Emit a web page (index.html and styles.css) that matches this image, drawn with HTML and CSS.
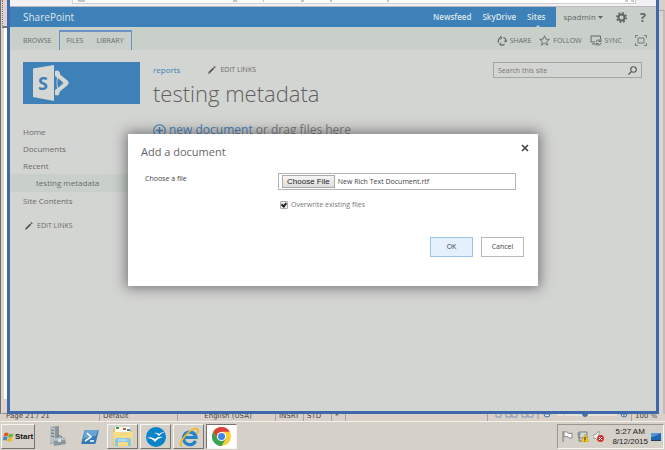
FILE: index.html
```html
<!DOCTYPE html>
<html lang="en">
  <head>
    <meta charset="UTF-8" />
    <meta name="viewport" content="width=device-width, initial-scale=1.0" />
    <title>testing metadata - Add a document</title>
    <link rel="stylesheet" href="styles.css">
  </head>
  <body>
    <div class="workspace">
      <div class="edge edge-left">
        <span class="edge-tool"></span>
        <span class="edge-page"></span>
        <span class="edge-foot"></span>
      </div>

      <div class="window">
        <div class="address-row">
          <div class="address">
            <svg width="320" height="2" viewBox="0 0 320 2" fill="none" stroke="#888"><path d="M5 1h7M160 1h4M190 1h1M228 1h3M257 1h2M314 1h2"/></svg>
            <svg width="12" height="2" viewBox="0 0 12 2" fill="none" stroke="#999"><path d="M2 1h3M8 1h3"/></svg>
          </div>
        </div>

        <header class="suite-bar">
          <a class="brand" href="#">SharePoint</a>
          <nav class="suite-links">
            <a href="#">Newsfeed</a>
            <a href="#">SkyDrive</a>
            <a class="current" href="#">Sites</a>
          </nav>
          <div class="account">
            <button class="user-btn">spadmin
              <svg width="5" height="3" viewBox="0 0 5 3"><path d="M0 0h5L2.500 3z" fill="#666"/></svg>
            </button>
            <button class="icon-btn" aria-label="Settings">
              <svg width="11" height="11" viewBox="0 0 22 22"><circle cx="11" cy="11" r="6" fill="none" stroke="#666" stroke-width="4"/><circle cx="11" cy="11" r="9" fill="none" stroke="#666" stroke-width="4" stroke-dasharray="3.500 3.569"/></svg>
            </button>
            <button class="icon-btn help" aria-label="Help">?</button>
          </div>
        </header>

        <div class="ribbon">
          <button class="tab">BROWSE</button>
          <div class="tab-group">
            <button class="tab">FILES</button>
            <button class="tab">LIBRARY</button>
          </div>
          <div class="ribbon-actions">
            <button class="action">
              <svg width="10" height="10" viewBox="0 0 20 20" fill="none" stroke="#666" stroke-width="2.500"><path d="M3 13A7.500 7.500 0 0 1 8 3M13 3a7.500 7.500 0 0 1 5 8M15 16.500a7.500 7.500 0 0 1-9 0"/><path d="M6 1l4 2-3 4M20 8l-2 4-4-2M8 19l-3-3 3-3" stroke-width="2"/></svg>
              SHARE
            </button>
            <button class="action">
              <svg width="11" height="11" viewBox="0 0 22 22" fill="none" stroke="#666" stroke-width="1.800"><path d="M11 1.500l2.700 6.700 7 .5-5.400 4.500 1.800 7L11 16.300 4.900 20.200l1.800-7L1.300 8.700l7-.5z"/></svg>
              FOLLOW
            </button>
            <button class="action">
              <svg width="12" height="11" viewBox="0 0 24 22" fill="none" stroke="#666" stroke-width="2"><path d="M10 14H2V2h19v6M4 18h6"/><path d="M12 14a5 5 0 0 1 9-2M22 16a5 5 0 0 1-9 2M22 8v5h-5M12 21v-4h5"/></svg>
              SYNC
            </button>
            <button class="action focus" aria-label="Focus on content">
              <svg width="12" height="11" viewBox="0 0 24 22" fill="none" stroke="#666" stroke-width="1.600"><path d="M1 6V1h5M18 1h5v5M23 16v5h-5M6 21H1v-5"/><path d="M6 6h12v10H6z"/></svg>
            </button>
          </div>
        </div>

        <div class="page">
          <aside class="side">
            <a class="logo" href="#" aria-label="SharePoint">
              <svg width="38" height="36" viewBox="0 0 38 36">
                <path d="M0 3.500L21 0v36L0 32z" fill="#d5d7d4"/>
                <text class="logo-letter" x="5" y="25">S</text>
                <g fill="#d5d7d4"><path d="M22 6l3-.500q2.500 1.500 2 4l8 6.500q1.500 2-.2 4l-8 6.500q0 3-2 4L22 30v-5l2-1.500q-1-5.500 0-11L22 11z"/></g>
                <path d="M25 13l5.500 5-5.500 5q-1.500-5 0-10z" fill="#3e80b8"/>
              </svg>
            </a>
            <nav class="side-nav">
              <a href="#">Home</a>
              <a href="#">Documents</a>
              <a href="#">Recent</a>
              <a class="child" href="#">testing metadata</a>
              <a href="#">Site Contents</a>
            </nav>
            <button class="edit-links">
              <svg width="8" height="8" viewBox="0 0 16 16"><path d="M0 16l1.500-4.500L10 3l2.500 2.500L4 14zM11 2l2-2 2.500 2.500-2 2z" fill="#555"/></svg>
              EDIT LINKS
            </button>
          </aside>

          <main class="content">
            <div class="top-row">
              <a class="crumb" href="#">reports</a>
              <button class="edit-links">
                <svg width="8" height="8" viewBox="0 0 16 16"><path d="M0 16l1.500-4.500L10 3l2.500 2.500L4 14zM11 2l2-2 2.500 2.500-2 2z" fill="#555"/></svg>
                EDIT LINKS
              </button>
              <form class="search">
                <input type="text" placeholder="Search this site" aria-label="Search this site" />
                <button type="button" aria-label="Search">
                  <svg width="9" height="9" viewBox="0 0 18 18" fill="none" stroke="#555" stroke-width="2.200"><circle cx="11" cy="7" r="5.500"/><path d="M7 11l-6 6"/></svg>
                </button>
              </form>
            </div>
            <h1>testing metadata</h1>
            <p class="new-row">
              <svg width="13" height="13" viewBox="0 0 26 26" fill="none" stroke="#3e80b8"><circle cx="13" cy="13" r="11.500" stroke-width="2.400"/><path d="M13 6v14M6 13h14" stroke-width="3"/></svg>
              <span><a href="#">new document</a> or drag files here</span>
            </p>
          </main>
        </div>

        <div class="overlay">
          <div class="dialog" role="dialog" aria-labelledby="dialogTitle">
            <div class="dialog-head">
              <h2 id="dialogTitle">Add a document</h2>
              <button class="close" aria-label="Close">
                <svg width="8" height="8" viewBox="0 0 8 8"><path d="M1 1l6 6M7 1L1 7" stroke="#444" stroke-width="1.600"/></svg>
              </button>
            </div>
            <div class="dialog-body">
              <label class="field-label" for="fileInput">Choose a file</label>
              <div class="field">
                <input type="file" id="fileInput" />
                <label class="check"><input type="checkbox" checked /> Overwrite existing files</label>
              </div>
            </div>
            <div class="dialog-actions">
              <button class="dialog-btn primary">OK</button>
              <button class="dialog-btn">Cancel</button>
            </div>
          </div>
        </div>
      </div>

      <div class="edge edge-right"></div>
    </div>

    <div class="status-bar">
      <span class="status-page">Page 21 / 21</span>
      <span class="status-style">Default</span>
      <span class="status-lang">English (USA)</span>
      <span class="status-mode">INSRT</span>
      <span class="status-mode">STD</span>
      <span class="status-mark">*</span>
      <span class="status-mark"></span>
      <span class="status-rest"></span>
      <span class="status-zoom">
        <svg width="140" height="8" viewBox="0 0 140 8" fill="none" stroke="#46739c">
          <path d="M5 0v4h5V0M15 0v4h5V0M21 0v4h5V0M31 0v4h5V0M37 0v4h5V0" stroke="#7f9ab5"/>
          <path d="M47 0v6M73 0v3" stroke="#999"/>
          <path d="M66 2h60" stroke="#f4f2ee"/>
          <circle cx="56" cy="1" r="3" fill="#dce8f3"/><path d="M54 1h4"/>
          <circle cx="94" cy="1" r="2.500" fill="#46739c"/>
          <circle cx="133" cy="1" r="3" fill="#dce8f3"/><path d="M131 1h4M133 0v3"/>
        </svg>
      </span>
      <span class="status-percent">100 %</span>
    </div>

    <footer class="taskbar">
      <button class="start">
        <svg width="11" height="10" viewBox="0 0 22 20"><path d="M3 2q4-2 8 0L9 9Q5 7 1 9z" fill="#e2572b"/><path d="M12 3q4 2 9 0l-2 7q-5 2-9 0z" fill="#6cb33f"/><path d="M1 10q4-2 8 0l-2 7q-4-2-7 0z" fill="#3a86d0"/><path d="M10 11q4 2 9 0l-2 7q-5 2-9 0z" fill="#f6b91c"/></svg>
        Start
      </button>
      <div class="tasks">
        <button class="task" aria-label="Server Manager">
          <svg width="20" height="21" viewBox="0 0 20 21"><path d="M3 1l9-1v16l-9 2z" fill="#8a949b"/><path d="M3 1l5 1v16l-5-1z" fill="#b9c1c6"/><path d="M4 4l3 .500M4 7l3 .500M4 10l3 .500" stroke="#667078"/><path d="M6 12l12-1 1 7-12 2z" fill="#89979f"/><path d="M6 12l12-1v3L6 15z" fill="#b4c0c6"/><path d="M10 11q2-3 5 0" fill="none" stroke="#5e696f"/><path d="M11 13h3v3h-3z" fill="#dbe0e2"/></svg>
        </button>
        <button class="task" aria-label="PowerShell">
          <svg width="18" height="16" viewBox="0 0 18 16"><path d="M4 1h13q1 0 .700 1l-3 12q-.3 1-1.500 1H1q-1 0-.700-1l3-12q.2-1 .700-1z" fill="#3479b8"/><path d="M4 1h13l-2 6Q8 7 2 10z" fill="#69a5d4"/><path d="M6 4l4 4-6 4M9 12h4" fill="none" stroke="#fff" stroke-width="1.600"/></svg>
        </button>
        <button class="task raised" aria-label="Windows Explorer">
          <svg width="22" height="21" viewBox="0 0 22 21"><path d="M1 4l2-2h5l2 2h10v16H1z" fill="#e6bd55"/><path d="M3 1h15v8H3z" fill="#fbfbef"/><path d="M4 2h3" stroke="#3a9e50" stroke-width="2"/><path d="M11 3h3" stroke="#d05b2c" stroke-width="2"/><path d="M15 4h3" stroke="#348ac4" stroke-width="2"/><path d="M1 6h20l-1 14H2z" fill="#f7db86"/><path d="M3 20v-6q0-2 2-2h11q3 0 3 2v6h-3v-4H6v4z" fill="#83c8e8"/><path d="M6 14h9" stroke="#d6f1fa"/></svg>
        </button>
        <button class="task raised" aria-label="OpenOffice">
          <svg width="20" height="20" viewBox="0 0 20 20"><circle cx="10" cy="10" r="10" fill="#0b83c9"/><path d="M8 6q3-1 5 1 2-2 6-2-4 1-6 4-2-3-5-3zM1 11q4-2 8 1 3-3 8-2-5 1-8 5-3-4-8-4z" fill="#fff"/></svg>
        </button>
        <button class="task raised" aria-label="Internet Explorer">
          <svg width="20" height="20" viewBox="0 0 20 20"><path d="M16.500 14A6.300 6.300 0 1 1 17 10.500H6" fill="none" stroke="#2384c9" stroke-width="3.200"/><path d="M3 19Q-1 18 6 9 14 0 18 2q2 1 0 5" fill="none" stroke="#efb52c" stroke-width="1.800"/></svg>
        </button>
        <button class="task raised active" aria-label="Chrome">
          <svg width="19" height="19" viewBox="0 0 20 20"><circle cx="10" cy="10" r="10" fill="#f8ce35"/><path d="M1.300 5A10 10 0 0 1 18.700 5H10L5.700 12.500z" fill="#da4437"/><path d="M1.300 5A10 10 0 0 0 10 20l4.300-7.500H5.700z" fill="#35a353"/><circle cx="10" cy="10" r="4.800" fill="#fff"/><circle cx="10" cy="10" r="3.700" fill="#4285e8"/></svg>
        </button>
      </div>
      <div class="tray">
        <svg width="11" height="11" viewBox="0 0 11 11"><path d="M1 0v11" stroke="#777"/><path d="M2 1q3-1 4 1 2 1 4 0v5q-2 1-4-1-2-1-4 0z" fill="#fafafa" stroke="#888"/></svg>
        <svg width="12" height="11" viewBox="0 0 12 11"><path d="M2 1h8v6H2z" fill="#d5dade" stroke="#787e83"/><path d="M2 3v7h3" fill="none" stroke="#777"/><circle cx="2" cy="3" r="1.800" fill="#8b9499"/><path d="M8 3l4 8H4z" fill="#f8ce22" stroke="#b39114" stroke-width=".5"/><path d="M8 6v3M8 9.500v1" stroke="#222"/></svg>
        <svg width="11" height="11" viewBox="0 0 11 11"><path d="M0 4h2l4-4v10L2 7H0z" fill="#f5f5f5" stroke="#888" stroke-width=".8"/><circle cx="7.500" cy="7.500" r="3.400" fill="#db2d27"/><path d="M6 6l3 3M9 6l-3 3" stroke="#fff"/></svg>
        <time class="clock"><span>5:27 AM</span><span>8/12/2015</span></time>
        <svg width="10" height="8" viewBox="0 0 10 8"><path d="M0 0h10v7H0z" fill="#2166b4"/><path d="M0 0h10L2 4H0z" fill="#5398d6"/><path d="M0 7.500h10" stroke="#243c58"/></svg>
      </div>
    </footer>

    <script>
      const fileInput = document.getElementById("fileInput");
      const transfer = new DataTransfer();

      transfer.items.add(new File([""], "New Rich Text Document.rtf"));
      fileInput.files = transfer.files;
    </script>
  </body>
</html>
```
FILE: styles.css
```css
* {
  margin: 0;
  padding: 0;
  box-sizing: border-box;
}

body {
  height: 100vh;
  display: flex;
  flex-direction: column;
  overflow: hidden;
  background-color: #d5d1c9;
  color: #6b6b6b;
  font-family: "Open Sans", "Noto Sans", sans-serif;
  font-size: 7px;
  line-height: 12px;
}

a {
  color: inherit;
  text-decoration: none;
}

button {
  border: none;
  background: none;
  color: inherit;
  font: inherit;
  cursor: pointer;
}

svg {
  display: block;
  flex: none;
}

.workspace {
  flex: 1;
  min-height: 0;
  display: flex;
}

.edge-left {
  width: 7px;
  display: flex;
  flex-direction: column;
  border-left: 1px solid #6f6d70;
  background-color: #ddd5cd;
}

.edge-tool {
  height: 28px;
  margin-left: 1px;
  border-bottom: 2px solid #77777a;
  border-left: 1px dotted #777777;
}

.edge-page {
  flex: 1;
  margin-left: 3px;
  background-color: #ffffff;
}

.edge-foot {
  height: 15px;
  margin-left: 1px;
  border-bottom: 1px solid #888888;
}

.edge-right {
  width: 6px;
  margin-top: 10px;
  border-top: 1px solid #aaa5a0;
  border-right: 2px solid #c0bcc4;
  background-color: #ddd3ca;
}

.window {
  position: relative;
  flex: 1;
  min-width: 0;
  display: flex;
  flex-direction: column;
  border: 3px solid #3f67ab;
  border-top: none;
  background-color: #d3d5d2;
}

/* browser chrome */
.address-row {
  height: 7px;
  padding: 0 20px 0 62px;
  background-color: #f1f1f3;
  border-bottom: 1px solid #b9b9bd;
}

.address {
  height: 4px;
  display: flex;
  justify-content: space-between;
  background-color: #ffffff;
  border: 1px solid #d0d0d0;
  border-top: none;
}

/* suite bar */
.suite-bar {
  height: 20px;
  display: flex;
  align-items: stretch;
  background-color: #3e80b8;
  color: #dde6e9;
  line-height: 20px;
}

.brand {
  flex: 1;
  padding-left: 13px;
  font-size: 10px;
}

.suite-links {
  display: flex;
  gap: 11px;
  padding-right: 11px;
  font-size: 8px;
  font-weight: 600;
}

.current {
  position: relative;
}

.current::after {
  content: "";
  position: absolute;
  bottom: 0;
  left: 50%;
  border: 2px solid transparent;
  border-bottom-color: #c8d0c9;
}

.account {
  display: flex;
  align-items: center;
  gap: 13px;
  padding: 0 10px 0 7px;
  background-color: #c8d0c9;
  color: #666666;
}

.user-btn {
  display: flex;
  align-items: center;
  gap: 2px;
  font-size: 8px;
}

.help {
  font-size: 13px;
  font-weight: 700;
}

/* ribbon */
.ribbon {
  height: 23px;
  display: flex;
  background-color: #c8d0c9;
}

.tab {
  padding: 4px 8px 0 13px;
}

.tab-group {
  display: flex;
  margin-top: 3px;
  border: 1px solid #6c91c4;
  border-top-width: 2px;
  border-bottom: none;
}

.tab-group .tab {
  padding: 0 7px 0 6px;
}

.ribbon-actions {
  display: flex;
  align-items: center;
  gap: 8px;
  margin-left: auto;
  padding: 4px 9px 0 0;
}

.action {
  display: flex;
  align-items: center;
  gap: 3px;
}

.focus {
  margin-left: 5px;
}

/* page */
.page {
  flex: 1;
  min-height: 0;
  display: flex;
}

.side {
  width: 130px;
  padding-top: 12px;
}

.logo {
  height: 42px;
  display: flex;
  align-items: center;
  margin-left: 13px;
  padding-left: 10px;
  background-color: #3e80b8;
}

.logo-letter {
  fill: #3e80b8;
  font-size: 18px;
  font-weight: 700;
}

.side-nav {
  display: flex;
  flex-direction: column;
  margin: 19px 0 11px;
  font-size: 8px;
  line-height: 17px;
}

.side-nav a {
  padding-left: 13px;
}

.side-nav .child {
  height: 18px;
  padding-left: 26px;
  background-color: #c8d0c9;
}

.edit-links {
  display: flex;
  align-items: center;
  gap: 4px;
}

.side .edit-links {
  margin-left: 15px;
}

.content {
  flex: 1;
  min-width: 0;
  padding: 12px 14px 0 13px;
}

.top-row {
  display: flex;
  align-items: center;
}

.crumb {
  margin-right: 28px;
  color: #3e80b8;
  font-size: 8px;
}

.search {
  width: 149px;
  display: flex;
  align-items: center;
  margin-left: auto;
  padding: 0 4px;
  border: 1px solid #a5a7a7;
}

.search input {
  flex: 1;
  min-width: 0;
  height: 14px;
  border: none;
  outline: none;
  background: none;
  color: #777777;
  font: inherit;
}

.search input::placeholder {
  color: #777777;
}

h1 {
  color: #606060;
  font-size: 22px;
  font-weight: 300;
  line-height: 30px;
}

.new-row {
  display: flex;
  align-items: center;
  gap: 3px;
  margin-top: 14px;
  color: #777777;
  font-size: 12px;
  line-height: 16px;
  white-space: nowrap;
}

.new-row a {
  color: #3e80b8;
}

/* dialog */
.overlay {
  position: absolute;
  inset: 8px 0 0;
  display: flex;
  align-items: center;
  justify-content: center;
}

.dialog {
  width: 64%;
  max-width: 410px;
  padding: 8px 14px 29px 13px;
  background-color: #ffffff;
  box-shadow: 0 0 12px 2px rgba(70, 65, 72, 0.65);
}

.dialog-head {
  display: flex;
  align-items: center;
  justify-content: space-between;
}

h2 {
  color: #666666;
  font-size: 11px;
  font-weight: 400;
  line-height: 20px;
}

.close {
  margin-right: -5px;
  padding-bottom: 8px;
}

.dialog-body {
  display: flex;
  margin-top: 11px;
  padding: 0 8px 0 4px;
}

.field-label {
  flex: 1;
  color: #444444;
}

.field {
  width: 238px;
  display: flex;
  flex-direction: column;
  gap: 9px;
}

.field input[type="file"] {
  width: 100%;
  height: 17px;
  padding: 1px 3px;
  border: 1px solid #b5b5b5;
  color: #444444;
  font-family: inherit;
  font-size: 7px;
  line-height: 13px;
}

.field input::file-selector-button {
  height: 13px;
  margin: 0 3px 0 0;
  padding: 0 4px;
  border: 1px solid #aaaaaa;
  background: linear-gradient(#f6f6f6, #dddddd);
  color: #222222;
  font-family: "Liberation Sans", Arial, sans-serif;
  font-size: 8px;
  line-height: 11px;
}

.check {
  display: flex;
  align-items: center;
  gap: 3px;
  padding-left: 2px;
  color: #777777;
}

.check input {
  appearance: none;
  width: 8px;
  height: 8px;
  display: flex;
  justify-content: center;
  border: 1px solid #aaaaaa;
  border-radius: 1px;
  background-color: #eeeeee;
}

.check input:checked::before {
  content: "";
  width: 4px;
  height: 5px;
  box-sizing: border-box;
  border: solid #222222;
  border-width: 0 2px 2px 0;
  transform: rotate(40deg);
}

.dialog-actions {
  display: flex;
  justify-content: flex-end;
  gap: 8px;
  margin-top: 26px;
}

.dialog-btn {
  width: 43px;
  height: 20px;
  border: 1px solid #b8b8b8;
  color: #444444;
}

.dialog-btn.primary {
  border-color: #9dc3e8;
  background-color: #e5f0fd;
}

/* status bar of the program behind */
.status-bar {
  height: 8px;
  display: flex;
  align-items: flex-end;
  padding: 0 6px;
  overflow: hidden;
  background-color: #d9d0c8;
  border-bottom: 1px solid #f3f1ed;
  color: #444444;
  font-family: "DejaVu Sans", sans-serif;
  font-size: 7px;
  line-height: 10px;
  white-space: nowrap;
}

.status-bar span + span {
  padding-left: 3px;
  border-left: 1px solid #a9a29c;
}

.status-page {
  width: 93px;
}

.status-style {
  width: 78px;
}

.status-lang {
  width: 98px;
  text-align: center;
}

.status-mode {
  width: 28px;
}

.status-mark {
  width: 14px;
  height: 10px;
}

.status-rest {
  flex: 1;
}

.status-percent {
  width: 28px;
}

/* taskbar */
.taskbar {
  height: 28px;
  display: flex;
  align-items: center;
  gap: 6px;
  padding: 1px 1px 0;
}

.start {
  height: 25px;
  display: flex;
  align-items: center;
  gap: 1px;
  padding: 0 1px;
  border: 1px solid #f8f6f2;
  border-right-color: #77736d;
  border-bottom-color: #77736d;
  color: #111111;
  font-family: "Liberation Sans", Arial, sans-serif;
  font-size: 8px;
  font-weight: 700;
}

.tasks {
  flex: 1;
  display: flex;
  gap: 2px;
}

.task {
  width: 31px;
  height: 25px;
  display: grid;
  place-items: center;
}

.raised {
  border: 1px solid #f8f6f2;
  border-right-color: #77736d;
  border-bottom-color: #77736d;
}

.active {
  border-color: #77736d #f8f6f2 #f8f6f2 #77736d;
  background-color: #ffffff;
}

.tray {
  height: 25px;
  display: flex;
  align-items: center;
  gap: 4px;
  padding: 0 2px 0 4px;
  border: 1px solid #9b9690;
  border-right-color: #f8f6f2;
  border-bottom-color: #f8f6f2;
}

.tray svg:last-child {
  margin-left: -1px;
}

.clock {
  display: flex;
  flex-direction: column;
  align-items: center;
  padding-left: 4px;
  color: #222222;
  font-family: "Liberation Sans", Arial, sans-serif;
  font-size: 8px;
  line-height: 10px;
}
```
